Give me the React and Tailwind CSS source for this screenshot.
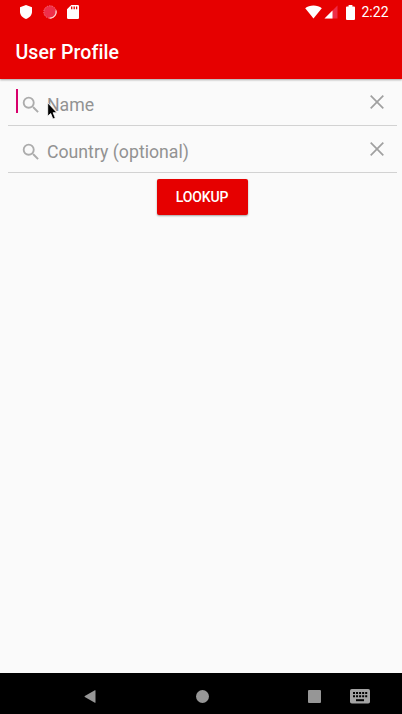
function StatusBar() {
  return (
    <div className="flex h-6 items-center justify-between pl-[19.5px] pr-[12.5px]">
      <div className="flex items-center">
        <svg width="12" height="14" viewBox="0 0 12 14" fill="#fff">
          <path d="M6 0 12 2.2V6.8C12 10.1 9.5 12.8 6 14 2.5 12.8 0 10.1 0 6.8V2.2Z" />
        </svg>
        <svg className="ml-[11px]" width="14" height="14" viewBox="0 0 14 14">
          <circle cx="7" cy="7" r="6.2" fill="#ef2f4a" stroke="#f4737d" strokeWidth="1" strokeDasharray="1.5 1" />
          <path d="M12.9 5.5A6 6 0 0 1 6.5 13" fill="none" stroke="#ffd6d2" strokeWidth="1.2" />
        </svg>
        <svg className="ml-[10px]" width="12" height="14" viewBox="0 0 12 14">
          <path d="M4.3 0H10.8Q12 0 12 1.2V12.8Q12 14 10.8 14H1.2Q0 14 0 12.8V4.3Z" fill="#fff" />
          <path d="M4.7 1.6v2.7M7.2 1.6v2.7M9.6 1.6v2.7" stroke="#e60000" strokeWidth="1.3" />
        </svg>
      </div>
      <div className="flex items-center">
        <svg width="17" height="14" viewBox="0 0 17 14" fill="#fff">
          <path d="M8.5 13.5.2 3.2C2.4 1.5 5.2.5 8.5.5s6.1 1 8.3 2.7Z" />
        </svg>
        <svg className="ml-[2px]" width="14" height="14" viewBox="0 0 14 14">
          <path d="M13.5.5V13.5H.5Z" fill="#ee2c48" />
          <path d="M8.5 5.5V13.5H.5Z" fill="#fff" />
        </svg>
        <svg className="ml-[8px]" width="9" height="15" viewBox="0 0 9 15" fill="#fff">
          <path d="M2.6 0H6.4V1.5H8Q9 1.5 9 2.5V14Q9 15 8 15H1Q0 15 0 14V2.5Q0 1.5 1 1.5H2.6Z" />
        </svg>
        <span className="ml-[7px] w-7 whitespace-nowrap text-[14px] leading-4 text-white">2:22</span>
      </div>
    </div>
  );
}

function SearchIcon() {
  return (
    <svg className="shrink-0" width="22" height="22" viewBox="0 0 24 24" fill="#acacac">
      <path d="M15.5 14h-.79l-.28-.27A6.47 6.47 0 0 0 16 9.5 6.5 6.5 0 1 0 9.5 16c1.61 0 3.09-.59 4.23-1.57l.27.28v.79l5 4.99L20.49 19l-4.99-5zm-6 0C7.01 14 5 11.99 5 9.5S7.01 5 9.5 5 14 7.01 14 9.5 11.99 14 9.5 14z" />
    </svg>
  );
}

function Field({ label, focused }) {
  return (
    <div className="ml-2 mr-[5px] flex h-[47px] items-center border-b border-[#d2d2d2] pl-2 pr-[13px]">
      <div className={focused ? "mb-[3px] h-6 w-0.5 bg-[#d8006c]" : "h-6 w-0.5"} />
      <div className="ml-[2px] mt-[5px] flex">
        <SearchIcon />
      </div>
      <div className="relative ml-[5px] mt-[6px] flex-1 text-[17.7px] leading-6 text-[#929292]">
        {label}
        {focused && (
          <svg className="absolute left-0 top-[9px]" width="11" height="19" viewBox="0 0 11 19">
            <path d="M.7.8V14.2L3.7 11.5 5.9 17 8.3 16 6.1 10.7H10Z" fill="#000" stroke="#fff" strokeWidth=".8" />
          </svg>
        )}
      </div>
      <svg className="mb-px" width="14" height="14" viewBox="0 0 14 14" fill="none" stroke="#a0a0a0" strokeWidth="1.7">
        <path d="M.7.7 13.3 13.3M13.3.7.7 13.3" />
      </svg>
    </div>
  );
}

function NavigationBar() {
  return (
    <div className="flex h-[41px] items-center bg-black pl-[84px] pt-[6px]">
      <svg width="12" height="13" viewBox="0 0 12 13" fill="#969696">
        <path d="M11.5.6V12.4Q11.5 13 10.9 12.7L.8 7Q.2 6.5.8 6L10.9.3Q11.5 0 11.5.6Z" />
      </svg>
      <div className="ml-[100px] size-[13px] rounded-full bg-[#969696]" />
      <div className="ml-[99px] size-[12.5px] rounded-[1px] bg-[#969696]" />
      <svg className="ml-[29px]" width="20" height="15" viewBox="0 0 20 15">
        <rect width="20" height="14.5" rx="1.8" fill="#a3a3a3" />
        <path d="M3 4H17.2M3 7.2H17.2" stroke="#000" strokeWidth="2" strokeDasharray="2 1.05" />
        <path d="M6 11.2H14" stroke="#000" strokeWidth="2" />
      </svg>
    </div>
  );
}

export default function App() {
  return (
    <div className="flex h-[714px] w-full flex-col overflow-hidden bg-[#fafafa] font-['Roboto',sans-serif]">
      <header className="h-[79px] shrink-0 bg-[#e60000] shadow-[0_1px_2px_rgba(0,0,0,0.35)]">
        <StatusBar />
        <h1 className="flex h-[55px] items-center pl-[15.5px] pt-[2px] text-[19.5px] font-medium tracking-[0.1px] text-white">
          User Profile
        </h1>
      </header>
      <main className="flex flex-1 flex-col">
        <Field label="Name" focused />
        <Field label="Country (optional)" />
        <button className="ml-[2px] mt-[6px] h-[35.5px] w-[91px] self-center rounded-[2px] bg-[#e60000] pt-px text-[14px] font-medium tracking-[-0.15px] text-white shadow-[0_1px_2px_rgba(0,0,0,0.35)]">
          LOOKUP
        </button>
      </main>
      <NavigationBar />
    </div>
  );
}
